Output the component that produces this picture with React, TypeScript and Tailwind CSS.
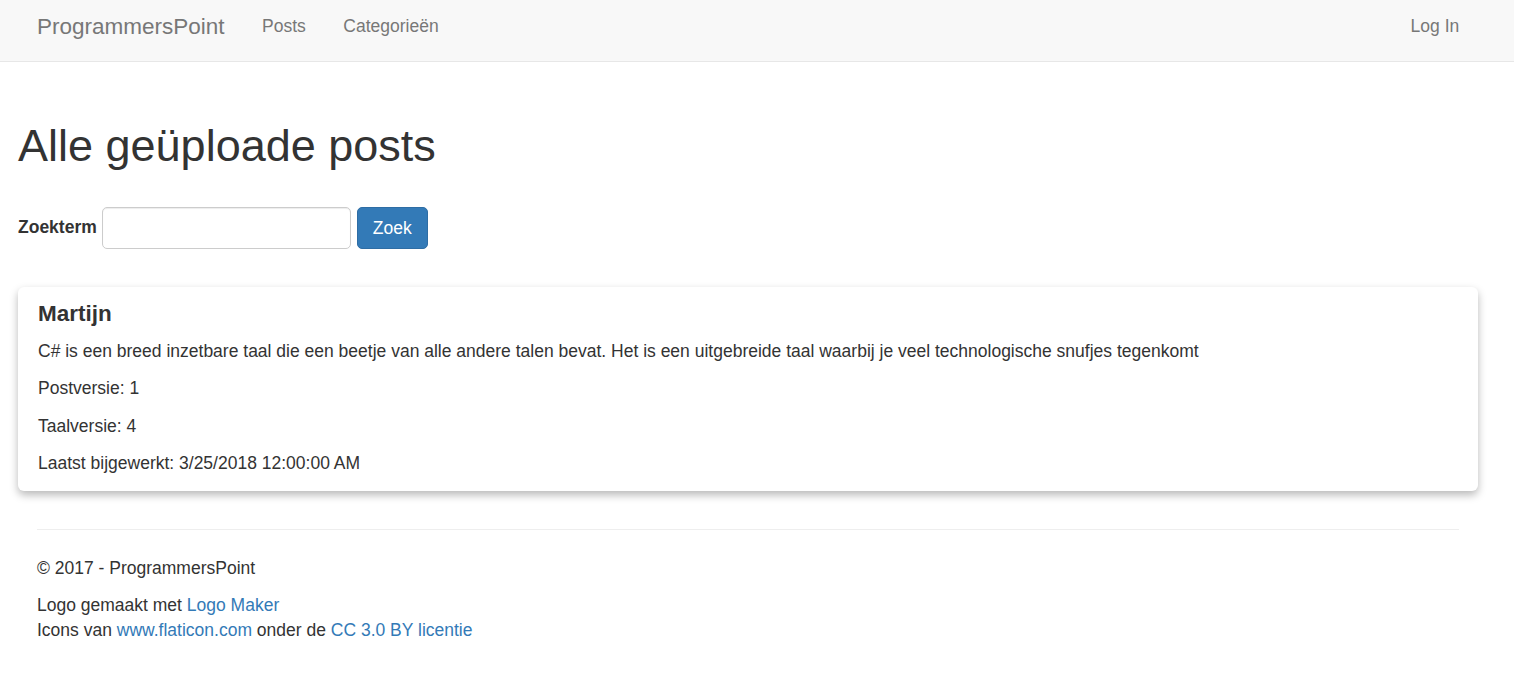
export default function App() {
  return (
    <div className="min-h-screen bg-white text-[#333] font-['Liberation_Sans',Arial,sans-serif] text-[17.5px] leading-[25px]">
      <nav className="h-[62px] bg-[#f8f8f8] border-b border-[#e7e7e7] flex items-start justify-between pl-[37px] pr-[36px]">
        <div className="flex items-start">
          <a href="#" className="pt-[14px] pr-[18.75px] text-[22.5px] leading-[25px] text-[#777]">ProgrammersPoint</a>
          <ul className="flex">
            <li><a href="#" className="block pt-[14px] px-[18.75px] text-[#777]">Posts</a></li>
            <li><a href="#" className="block pt-[14px] px-[18.75px] text-[#777]">Categorieën</a></li>
          </ul>
        </div>
        <ul className="flex">
          <li><a href="#" className="block pt-[14px] px-[18.75px] text-[#777]">Log In</a></li>
        </ul>
      </nav>

      <main className="pl-[18px] pr-[36px]">
        <h1 className="mt-[59px] text-[45px] leading-[49.5px] font-normal">Alle geüploade posts</h1>

        <form className="mt-[36px] flex items-center h-[42px]" onSubmit={e => e.preventDefault()}>
          <label className="font-bold mb-[1px]">Zoekterm</label>
          <input
            type="text"
            className="ml-[5px] w-[249px] h-[42px] px-[15px] border border-[#ccc] rounded-[5px] shadow-[inset_0_1px_1px_rgba(0,0,0,0.075)] outline-none"
          />
          <button
            type="submit"
            className="ml-[6px] h-[42px] px-[15px] pt-[1px] bg-[#337ab7] border border-[#2e6da4] rounded-[5px] text-white"
          >
            Zoek
          </button>
        </form>

        <div className="mt-[38px] bg-white rounded-[6px] shadow-[0_4px_9px_rgba(0,0,0,0.28)] px-[20px] pt-[15px] pb-[2px]">
          <h4 className="text-[22.5px] leading-[24.75px] font-bold mb-[12.5px]">Martijn</h4>
          <p className="mb-[12.5px]">C# is een breed inzetbare taal die een beetje van alle andere talen bevat. Het is een uitgebreide taal waarbij je veel technologische snufjes tegenkomt</p>
          <p className="mb-[12.5px]">Postversie: 1</p>
          <p className="mb-[12.5px]">Taalversie: 4</p>
          <p className="mb-[12.5px]">Laatst bijgewerkt: 3/25/2018 12:00:00 AM</p>
        </div>
      </main>

      <footer className="pl-[37px] pr-[55px]">
        <hr className="mt-[38px] mb-[26px] border-t border-[#eee]" />
        <p className="mb-[12.5px]">© 2017 - ProgrammersPoint</p>
        <p>
          Logo gemaakt met <a href="#" className="text-[#337ab7]">Logo Maker</a>
          <br />
          Icons van <a href="#" className="text-[#337ab7]">www.flaticon.com</a> onder de <a href="#" className="text-[#337ab7]">CC 3.0 BY licentie</a>
        </p>
      </footer>
    </div>
  )
}
